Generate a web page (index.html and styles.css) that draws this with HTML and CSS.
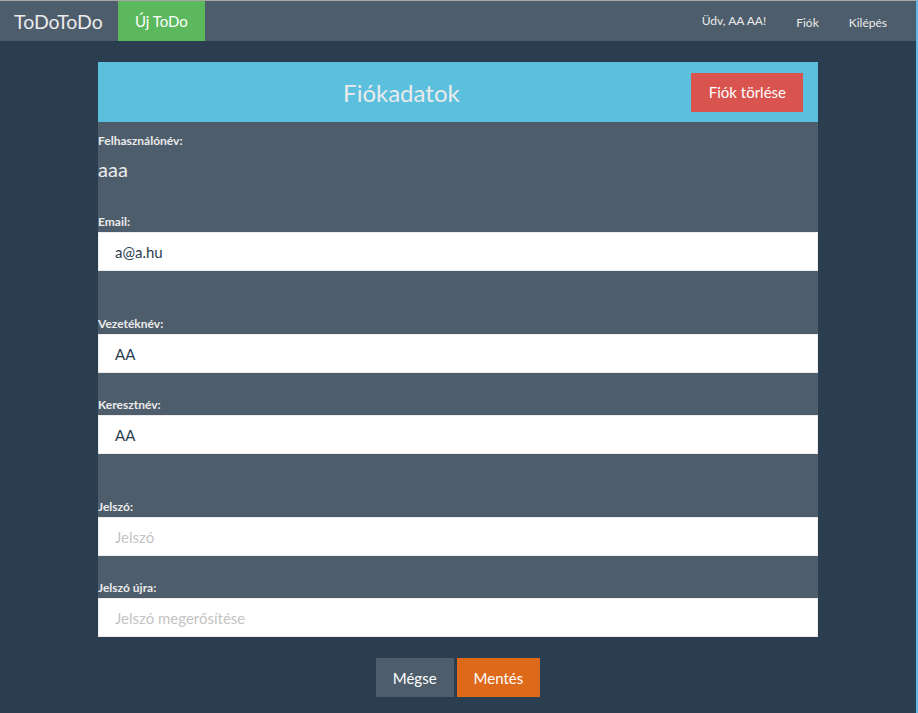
FILE: index.html
```html
<!DOCTYPE html>
<html lang="hu">
<head>
<meta charset="utf-8">
<title>ToDoToDo - Fiók</title>
<link rel="stylesheet" href="styles.css">
</head>
<body>
<nav class="navbar">
  <div class="nav-left">
    <a class="brand" href="#">ToDoToDo</a>
    <a class="new-todo" href="#">Új ToDo</a>
  </div>
  <div class="nav-right">
    <span class="nav-text">Üdv, AA AA!</span>
    <a class="nav-link" href="#">Fiók</a>
    <a class="nav-link" href="#">Kilépés</a>
  </div>
</nav>

<main class="container">
  <div class="panel-head">
    <h1 class="panel-title">Fiókadatok</h1>
    <button class="btn btn-danger" type="button">Fiók törlése</button>
  </div>
  <form class="panel-body">
    <div class="group group-first">
      <label class="label">Felhasználónév:</label>
      <p class="static">aaa</p>
    </div>
    <div class="group group-email">
      <label class="label" for="email">Email:</label>
      <input class="input" id="email" type="text" value="a@a.hu">
    </div>
    <div class="group group-wide">
      <label class="label" for="vn">Vezetéknév:</label>
      <input class="input" id="vn" type="text" value="AA">
    </div>
    <div class="group group-narrow">
      <label class="label" for="kn">Keresztnév:</label>
      <input class="input" id="kn" type="text" value="AA">
    </div>
    <div class="group group-wide">
      <label class="label" for="pw">Jelszó:</label>
      <input class="input" id="pw" type="password" placeholder="Jelszó">
    </div>
    <div class="group group-narrow">
      <label class="label" for="pw2">Jelszó újra:</label>
      <input class="input" id="pw2" type="password" placeholder="Jelszó megerősítése">
    </div>
  </form>
  <div class="actions">
    <button class="btn btn-default" type="button">Mégse</button>
    <button class="btn btn-primary" type="button">Mentés</button>
  </div>
</main>
</body>
</html>
```
FILE: styles.css
```css
html {
  background: #2b3e50;
}
body {
  margin: 0;
  min-height: 100vh;
  box-sizing: border-box;
  background: #2b3e50;
  border-top: 1px solid #a7a7a7;
  border-right: 2px solid #62b8e6;
  font-family: Lato, "Liberation Sans", sans-serif;
  color: #ebebeb;
}
a {
  text-decoration: none;
  color: #ebebeb;
}
.navbar {
  height: 40px;
  background: #4e5d6c;
  display: flex;
  justify-content: space-between;
  align-items: stretch;
}
.nav-left {
  display: flex;
  align-items: stretch;
}
.brand {
  display: flex;
  align-items: center;
  padding: 1px 15px 0 14px;
  font-size: 19.5px;
  color: #ebebeb;
}
.new-todo {
  display: flex;
  align-items: center;
  padding: 0 17px 0 17px;
  background: #5cb85c;
  color: #ffffff;
  font-size: 15px;
}
.nav-right {
  display: flex;
  align-items: center;
  padding-right: 14px;
  font-size: 12px;
}
.nav-text {
  padding: 0 15px 2px 0;
}
.nav-link {
  padding: 3px 15px 0;
}
.container {
  width: 720px;
  margin: 21px auto 0;
}
.panel-head {
  height: 60px;
  background: #5bc0de;
  display: flex;
  align-items: center;
  padding-right: 15px;
}
.panel-title {
  flex: 1;
  margin: 0;
  padding-left: 14px;
  text-align: center;
  font-size: 24px;
  font-weight: 400;
  color: #ebebeb;
}
.btn {
  height: 39px;
  border: 0;
  border-radius: 0;
  padding: 0 17px;
  font-family: Lato, "Liberation Sans", sans-serif;
  font-size: 15px;
  color: #ffffff;
  cursor: pointer;
}
.btn-danger {
  background: #d9534f;
  padding: 0 17px 0 18px;
}
.btn-default {
  background: #4e5d6c;
}
.btn-primary {
  background: #df691a;
}
.panel-body {
  background: #4e5d6c;
  padding-top: 11px;
  margin: 0;
}
.group {
  display: flex;
  flex-direction: column;
}
.group-email {
  margin-top: 32px;
}
.group-wide {
  margin-top: 45px;
}
.group-narrow {
  margin-top: 24px;
}
.label {
  display: block;
  font-size: 12px;
  line-height: 16px;
  font-weight: 700;
  margin-bottom: 2px;
}
.static {
  margin: 5px 0 0;
  font-size: 20px;
  line-height: 26px;
}
.input {
  box-sizing: border-box;
  width: 100%;
  height: 39px;
  padding: 0 16px;
  border: 1px solid #ececec;
  border-radius: 0;
  background: #ffffff;
  font-family: Lato, "Liberation Sans", sans-serif;
  font-size: 15px;
  color: #2b3e50;
  outline: none;
}
.input::placeholder {
  color: #c4c4c4;
  opacity: 1;
}
.actions {
  display: flex;
  justify-content: center;
  gap: 3px;
  margin-top: 21px;
}
```
